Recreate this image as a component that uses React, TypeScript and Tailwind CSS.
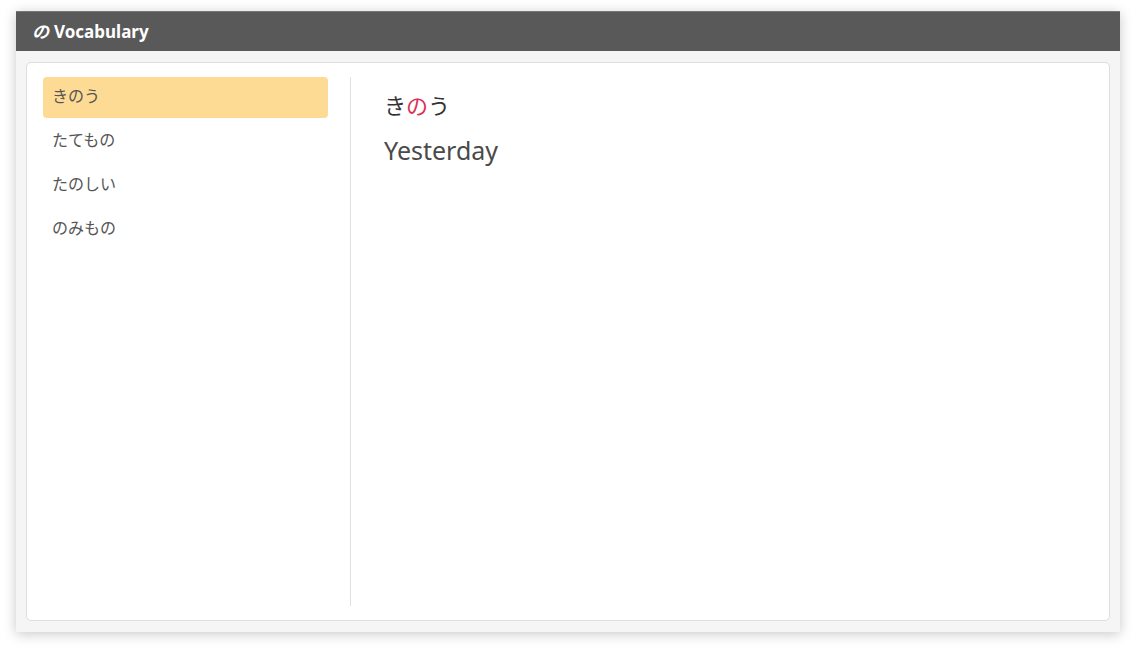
import React, { useState } from "react";

const words = [
  { kana: "きのう", pre: "き", mid: "の", post: "う", en: "Yesterday" },
  { kana: "たてもの", pre: "たても", mid: "の", post: "", en: "Building" },
  { kana: "たのしい", pre: "た", mid: "の", post: "しい", en: "Fun" },
  { kana: "のみもの", pre: "", mid: "の", post: "みもの", en: "Drink" },
];

export default function App() {
  const [sel, setSel] = useState(0);
  const w = words[sel];
  return (
    <div
      className="w-[1136px] h-[653px] bg-white pt-[11px] pl-[16px]"
      style={{ fontFamily: '"Noto Sans", "Noto Sans CJK JP", sans-serif' }}
    >
      <div className="w-[1104px] h-[621px] flex flex-col bg-[#f5f5f5] shadow-[0_2px_12px_rgba(0,0,0,0.22)]">
        <div className="h-[40px] bg-[#595959] border-t border-[#777] flex items-center pl-[16px] text-white font-bold text-[17px]">
          <span className="italic mr-[5px]">の</span>
          <span>Vocabulary</span>
        </div>
        <div className="flex-1 p-[10px] pt-[11px] pb-[11px] flex">
          <div className="flex-1 bg-white border border-[#dedede] rounded-[5px] flex px-[16px] py-[14px]">
            <div className="w-[285px] flex flex-col gap-[3px]">
              {words.map((x, i) => (
                <div
                  key={x.kana}
                  onClick={() => setSel(i)}
                  className={
                    "h-[41px] flex items-center pl-[9px] pb-[3px] rounded-[4px] text-[16px] text-[#555] cursor-pointer " +
                    (i === sel ? "bg-[#fedb94]" : "")
                  }
                >
                  {x.kana}
                </div>
              ))}
            </div>
            <div className="ml-[22px] w-px bg-[#e0e0e0]" />
            <div className="pl-[33px] pt-[12px] flex flex-col">
              <div className="text-[22px] leading-[32px] text-[#333]">
                {w.pre}
                <span className="text-[#dc2f55]">{w.mid}</span>
                {w.post}
              </div>
              <div className="mt-[13px] text-[25px] leading-[32px] text-[#4a4a4a]">{w.en}</div>
            </div>
          </div>
        </div>
      </div>
    </div>
  );
}
